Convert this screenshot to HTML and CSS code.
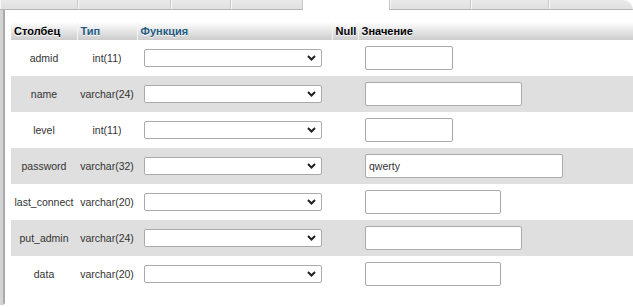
FILE: index.html
```html
<!DOCTYPE html>
<html lang="ru">
<head>
<meta charset="utf-8">
<title>Вставка</title>
<link rel="stylesheet" href="styles.css">
</head>
<body>
<div class="window">
  <div class="tabs">
    <span class="tab t1"></span>
    <span class="tab t2"></span>
    <span class="tab t3"></span>
    <span class="tab t4"></span>
    <span class="tab active t5"></span>
    <span class="tab t6"></span>
    <span class="tab t7"></span>
    <span class="tab last t8"></span>
  </div>
  <div class="main">
    <div class="edge"></div>
    <div class="content">
      <table class="insert">
        <colgroup>
          <col class="c-col"><col class="c-type"><col class="c-func"><col class="c-null"><col class="c-val">
        </colgroup>
        <thead>
          <tr>
            <th>Столбец</th>
            <th><a class="sort">Тип</a></th>
            <th><a class="sort">Функция</a></th>
            <th>Null</th>
            <th>Значение</th>
          </tr>
        </thead>
        <tbody>
          <tr class="odd">
            <td class="name">admid</td><td class="type">int(11)</td>
            <td><div class="sel"><select><option></option></select><svg class="chev" width="9" height="6" viewBox="0 0 9 6"><path d="M1 1 L4.5 4.5 L8 1" fill="none" stroke="#222" stroke-width="2"/></svg></div></td>
            <td></td><td><input class="val w-s" type="text"></td>
          </tr>
          <tr class="even">
            <td class="name">name</td><td class="type">varchar(24)</td>
            <td><div class="sel"><select><option></option></select><svg class="chev" width="9" height="6" viewBox="0 0 9 6"><path d="M1 1 L4.5 4.5 L8 1" fill="none" stroke="#222" stroke-width="2"/></svg></div></td>
            <td></td><td><input class="val w-l" type="text"></td>
          </tr>
          <tr class="odd">
            <td class="name">level</td><td class="type">int(11)</td>
            <td><div class="sel"><select><option></option></select><svg class="chev" width="9" height="6" viewBox="0 0 9 6"><path d="M1 1 L4.5 4.5 L8 1" fill="none" stroke="#222" stroke-width="2"/></svg></div></td>
            <td></td><td><input class="val w-s" type="text"></td>
          </tr>
          <tr class="even">
            <td class="name">password</td><td class="type">varchar(32)</td>
            <td><div class="sel"><select><option></option></select><svg class="chev" width="9" height="6" viewBox="0 0 9 6"><path d="M1 1 L4.5 4.5 L8 1" fill="none" stroke="#222" stroke-width="2"/></svg></div></td>
            <td></td><td><input class="val w-xl" type="text" value="qwerty"></td>
          </tr>
          <tr class="odd">
            <td class="name">last_connect</td><td class="type">varchar(20)</td>
            <td><div class="sel"><select><option></option></select><svg class="chev" width="9" height="6" viewBox="0 0 9 6"><path d="M1 1 L4.5 4.5 L8 1" fill="none" stroke="#222" stroke-width="2"/></svg></div></td>
            <td></td><td><input class="val w-m" type="text"></td>
          </tr>
          <tr class="even">
            <td class="name">put_admin</td><td class="type">varchar(24)</td>
            <td><div class="sel"><select><option></option></select><svg class="chev" width="9" height="6" viewBox="0 0 9 6"><path d="M1 1 L4.5 4.5 L8 1" fill="none" stroke="#222" stroke-width="2"/></svg></div></td>
            <td></td><td><input class="val w-l" type="text"></td>
          </tr>
          <tr class="odd">
            <td class="name">data</td><td class="type">varchar(20)</td>
            <td><div class="sel"><select><option></option></select><svg class="chev" width="9" height="6" viewBox="0 0 9 6"><path d="M1 1 L4.5 4.5 L8 1" fill="none" stroke="#222" stroke-width="2"/></svg></div></td>
            <td></td><td><input class="val w-m" type="text"></td>
          </tr>
        </tbody>
      </table>
    </div>
  </div>
</div>
</body>
</html>
```

FILE: styles.css
```css
* { box-sizing: border-box; }

html, body {
  margin: 0;
  padding: 0;
  background: #fff;
}

body {
  width: 633px;
  height: 307px;
  overflow: hidden;
  font-family: "Liberation Sans", Arial, sans-serif;
  font-size: 10.5px;
  color: #333;
}

.window {
  display: flex;
  flex-direction: column;
  height: 307px;
}

/* tab strip */
.tabs {
  display: flex;
  height: 10px;
  flex: none;
}

.tab {
  display: block;
  height: 10px;
  background: linear-gradient(#e9e9e9, #e0e0e0);
  border-bottom: 1px solid #b5b5b5;
  border-right: 1px solid #c9c9c9;
  box-shadow: inset 1px 0 0 #f7f7f7;
}

.tab.active {
  background: #fff;
  border-bottom: none;
  border-right: 1px solid #c4c4c4;
  box-shadow: none;
}

.tab.last {
  border-right: none;
  border-top-right-radius: 12px;
}

.t1 { width: 78px; }
.t2 { width: 93px; }
.t3 { width: 60px; }
.t4 { width: 72px; }
.t5 { width: 87px; }
.t6 { width: 81px; }
.t7 { width: 78px; }
.t8 { flex: 1; }

/* main area */
.main {
  flex: 1;
  display: flex;
  min-height: 0;
}

.edge {
  width: 5px;
  flex: none;
  margin-bottom: 2px;
  background: linear-gradient(90deg, #d4d4d4 0, #d4d4d4 3px, #a9a9a9 3px, #a9a9a9 5px);
  border-bottom-right-radius: 3px;
}

.content {
  flex: 1;
  padding: 12px 0 0 6px;
}

.insert {
  border-collapse: collapse;
  border-spacing: 0;
  table-layout: fixed;
  width: 622px;
}

.c-col { width: 66px; }
.c-type { width: 60px; }
.c-func { width: 195px; }
.c-null { width: 26px; }
.c-val { width: auto; }

.insert th {
  height: 18px;
  padding: 0 3px;
  text-align: left;
  font-size: 11px;
  font-weight: bold;
  color: #000;
  background: linear-gradient(#ffffff, #cccccc);
  text-shadow: 0 1px 0 #fff;
  white-space: nowrap;
}

.insert th + th {
  border-left: 1px solid #f4f4f4;
}

.insert th .sort {
  color: #235a81;
}

.insert td {
  height: 36px;
  padding: 0;
  vertical-align: middle;
  white-space: nowrap;
}

.insert tr.even td {
  background: #dfdfdf;
}

.insert td.name,
.insert td.type {
  text-align: center;
  color: #333;
}

.sel {
  position: relative;
  width: 178px;
  height: 18px;
  margin-left: 7px;
}

.sel select {
  appearance: none;
  -webkit-appearance: none;
  display: block;
  width: 178px;
  height: 18px;
  margin: 0;
  padding: 0 4px;
  border: 1px solid #aaa;
  border-radius: 2px;
  background: #fff;
  font: inherit;
}

.chev {
  position: absolute;
  right: 6px;
  top: 6px;
  pointer-events: none;
}

.val {
  display: block;
  height: 24px;
  margin: 0 0 0 7px;
  padding: 0 3px;
  border: 1px solid #aaa;
  border-radius: 2px;
  background: #fff;
  font-family: "Liberation Sans", Arial, sans-serif;
  font-size: 10.5px;
  color: #333;
  outline: none;
}

.w-s { width: 88px; }
.w-m { width: 136px; }
.w-l { width: 157px; }
.w-xl { width: 198px; }
```
